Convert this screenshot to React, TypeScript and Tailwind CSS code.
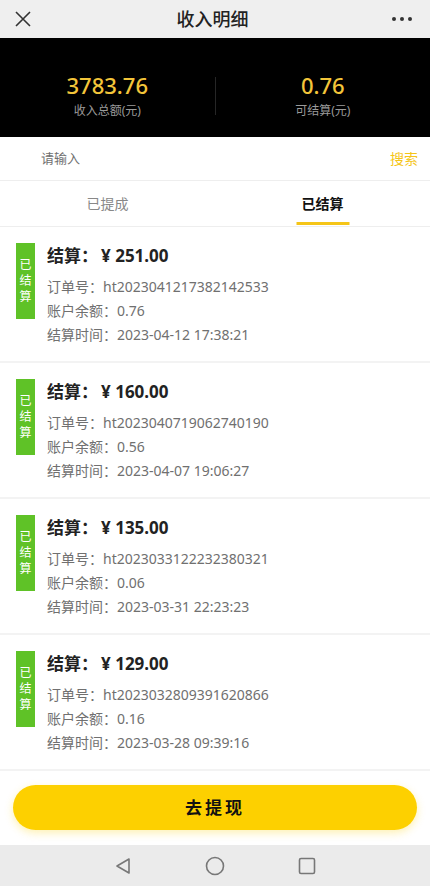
const records = [
  { amount: "251.00", order: "ht2023041217382142533", balance: "0.76", time: "2023-04-12 17:38:21" },
  { amount: "160.00", order: "ht2023040719062740190", balance: "0.56", time: "2023-04-07 19:06:27" },
  { amount: "135.00", order: "ht2023033122232380321", balance: "0.06", time: "2023-03-31 22:23:23" },
  { amount: "129.00", order: "ht2023032809391620866", balance: "0.16", time: "2023-03-28 09:39:16" },
];

const font = { fontFamily: '"Noto Sans", "Noto Sans CJK SC", sans-serif' };

const RecordCard = ({ r }: { r: (typeof records)[number] }) => {
  return (
    <div className="flex h-[136px] border-b-2 border-[#f3f3f3] pt-4 pl-4">
      <div className="flex h-[76px] w-[19px] flex-col items-center justify-center bg-[#5fc227] text-[12px] leading-[16px] text-white">
        <span>已</span>
        <span>结</span>
        <span>算</span>
      </div>
      <div className="ml-3 mt-[2px]">
        <div className="text-[17px] font-bold leading-[22px] text-[#222]">
          结算：<span className="ml-[3px]">¥ {r.amount}</span>
        </div>
        <div className="mt-2 text-[14px] leading-6 text-[#707070]">
          <p>订单号：{r.order}</p>
          <p>账户余额：{r.balance}</p>
          <p>结算时间：{r.time}</p>
        </div>
      </div>
    </div>
  );
};

const App = () => {
  return (
    <div className="flex h-[886px] w-[430px] flex-col overflow-hidden bg-white" style={font}>
      {/* top bar */}
      <div className="flex h-[38px] items-center justify-between bg-[#efefef] px-3">
        <svg width="20" height="20" viewBox="0 0 20 20" className="ml-[1px]">
          <path d="M3 3 L17 17 M17 3 L3 17" stroke="#333" strokeWidth="1.6" fill="none" />
        </svg>
        <h1 className="text-[18px] font-medium text-[#222]">收入明细</h1>
        <div className="flex gap-[4px] pr-[6px]">
          <span className="h-[4px] w-[4px] rounded-full bg-[#333]" />
          <span className="h-[4px] w-[4px] rounded-full bg-[#333]" />
          <span className="h-[4px] w-[4px] rounded-full bg-[#333]" />
        </div>
      </div>

      {/* summary */}
      <div className="flex h-[99px] items-center bg-black pt-[16px]">
        <div className="flex flex-1 flex-col items-center">
          <span className="text-[22px] font-medium leading-[28px] text-[#f3c53a]">3783.76</span>
          <span className="mt-[3px] text-[12px] text-[#9a9a9a]">收入总额(元)</span>
        </div>
        <div className="h-[38px] w-px bg-[#262626]" />
        <div className="flex flex-1 flex-col items-center">
          <span className="text-[22px] font-medium leading-[28px] text-[#f3c53a]">0.76</span>
          <span className="mt-[3px] text-[12px] text-[#9a9a9a]">可结算(元)</span>
        </div>
      </div>

      {/* search */}
      <div className="flex h-[44px] items-center justify-between border-b border-[#eeeeee] pl-[41px] pr-3">
        <span className="text-[13px] text-[#707070]">请输入</span>
        <span className="text-[14px] text-[#f5c518]">搜索</span>
      </div>

      {/* tabs */}
      <div className="flex h-[46px] border-b border-[#eeeeee]">
        <div className="flex flex-1 items-center justify-center text-[14px] text-[#888]">已提成</div>
        <div className="relative flex flex-1 items-center justify-center text-[14px] font-bold text-[#111]">
          已结算
          <span className="absolute bottom-[1px] left-1/2 h-[3px] w-[53px] -translate-x-1/2 bg-[#f5c518]" />
        </div>
      </div>

      {/* list */}
      <div className="flex-1">
        {records.map((r) => (
          <RecordCard key={r.order} r={r} />
        ))}
      </div>

      {/* button */}
      <div className="px-[13px] pb-[15px]">
        <button className="h-[45px] w-full rounded-full bg-[#fdd000] text-[17px] font-bold tracking-[3px] text-[#111] shadow-[0_3px_8px_rgba(253,208,0,0.3)]">
          去提现
        </button>
      </div>

      {/* android nav */}
      <div className="flex h-[41px] items-center justify-center gap-[72px] bg-[#ebebeb]">
        <svg width="20" height="20" viewBox="0 0 20 20">
          <path d="M16 3 L4 10 L16 17 Z" stroke="#777" strokeWidth="1.6" fill="none" strokeLinejoin="round" />
        </svg>
        <svg width="20" height="20" viewBox="0 0 20 20">
          <circle cx="10" cy="10" r="8.5" stroke="#777" strokeWidth="1.6" fill="none" />
        </svg>
        <svg width="20" height="20" viewBox="0 0 20 20">
          <rect x="2.5" y="2.5" width="15" height="15" rx="1.5" stroke="#777" strokeWidth="1.6" fill="none" />
        </svg>
      </div>
    </div>
  );
};

export default App;
